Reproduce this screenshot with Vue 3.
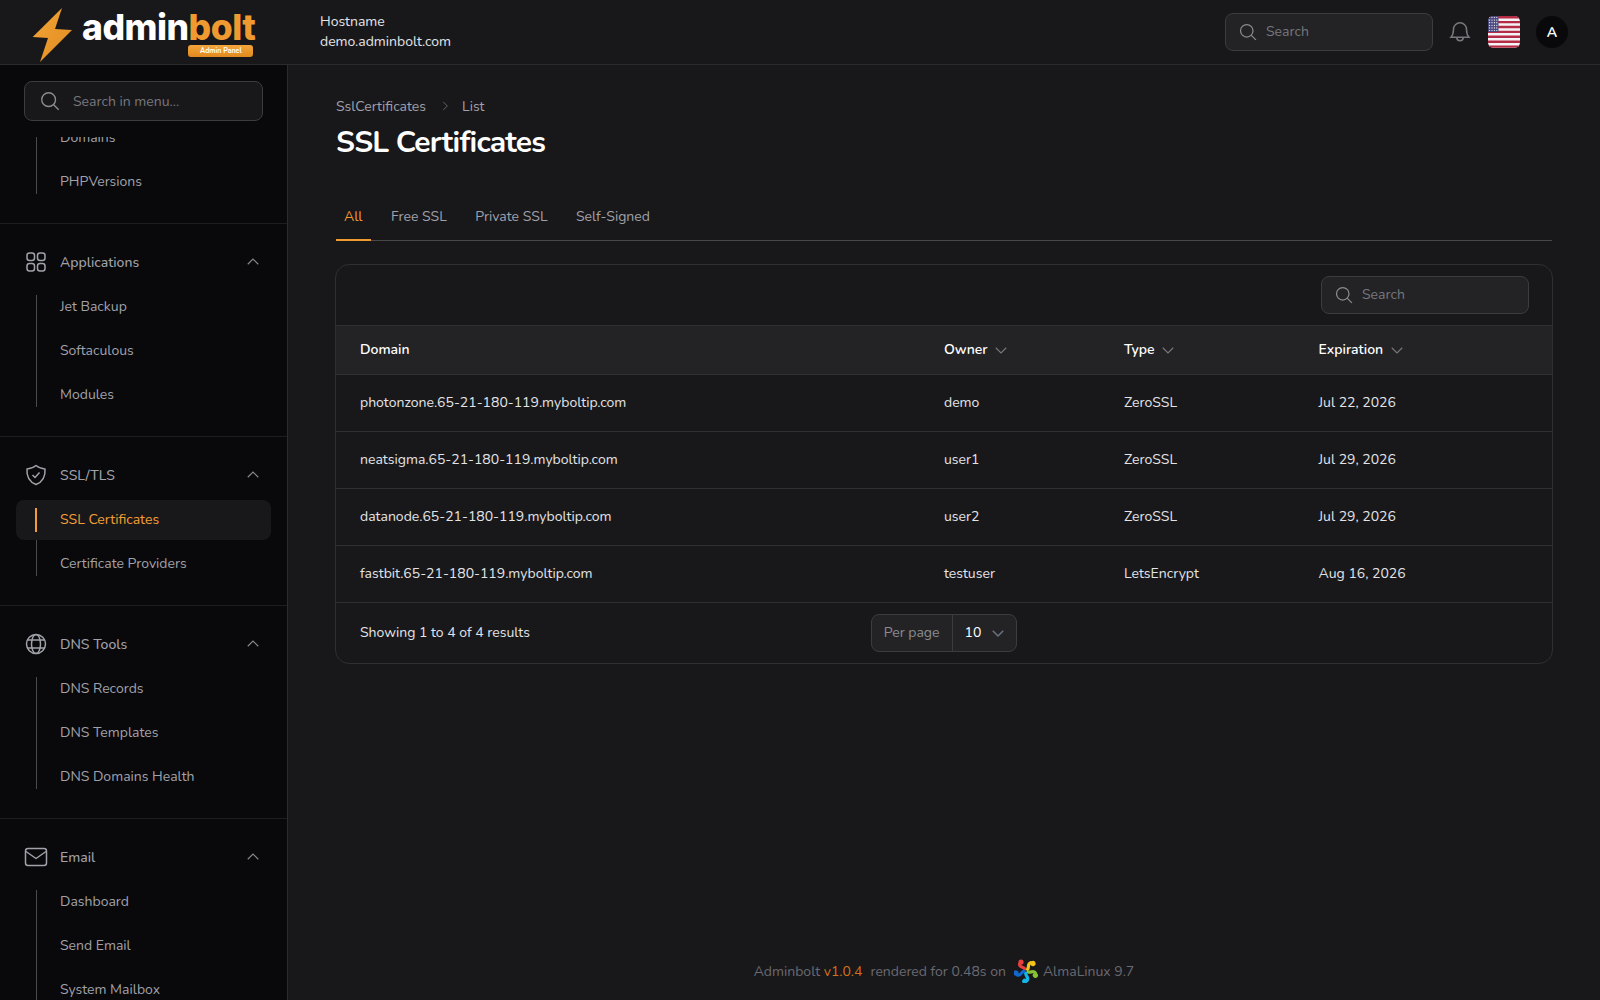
<template>
  <div class="shell">
    <header class="topbar">
      <div class="logo">
        <svg class="bolt" viewBox="0 0 40 54" width="40" height="54">
          <defs>
            <linearGradient id="boltFill" x1="0" y1="0" x2="1" y2="1">
              <stop offset="0" stop-color="#f4a63a" />
              <stop offset="1" stop-color="#e08a1e" />
            </linearGradient>
          </defs>
          <polygon points="30,0 23,21 40,22 8,54 16,30 0.7,29" fill="url(#boltFill)" />
        </svg>
        <div class="wordmark">
          <div class="word"><span>admin</span><span class="orange">bolt</span></div>
          <div class="badge">Admin Panel</div>
        </div>
      </div>
      <div class="hostname">
        <div>Hostname</div>
        <div>demo.adminbolt.com</div>
      </div>
      <div class="top-right">
        <label class="input top-search">
          <svg class="ico" viewBox="0 0 24 24"><circle cx="10.5" cy="10.5" r="7.5" /><path d="M16 16l5.5 5.5" /></svg>
          <span>Search</span>
        </label>
        <svg class="bell" viewBox="0 0 24 24">
          <path d="M6 9.5a6 6 0 0 1 12 0c0 3.6.9 5.8 2.3 7.3H3.7C5.1 15.3 6 13.1 6 9.5z" />
          <path d="M9 17a3 3 0 0 0 6 0" />
        </svg>
        <svg class="flag" viewBox="0 0 32 32" width="32" height="32">
          <rect width="32" height="32" rx="5" fill="#f3f3f5" />
          <path v-for="y in stripes" :key="y" :d="`M0 ${y}h32`" stroke="#b52a45" stroke-width="2.4" />
          <rect x="0" y="0" width="10.5" height="16" fill="#4a4a80" />
          <circle v-for="s in stars" :key="s.id" :cx="s.x" :cy="s.y" r=".6" fill="#fff" />
        </svg>
        <div class="avatar">A</div>
      </div>
    </header>

    <div class="body">
      <aside class="sidebar">
        <div class="side-search">
          <label class="input">
            <svg class="ico" viewBox="0 0 24 24"><circle cx="10.5" cy="10.5" r="7.5" /><path d="M16 16l5.5 5.5" /></svg>
            <span>Search in menu...</span>
          </label>
        </div>
        <div class="side-scroll">
          <nav class="side-nav">
            <section v-for="group in groups" :key="group.name" class="group">
              <div v-if="group.name !== 'Top'" class="group-head">
                <svg class="group-ico" viewBox="0 0 24 24" v-html="group.icon"></svg>
                <span>{{ group.name }}</span>
                <svg class="chev" viewBox="0 0 24 24"><path d="M5 15l7-7 7 7" /></svg>
              </div>
              <ul>
                <li v-for="item in group.items" :key="item" :class="{ active: item === 'SSL Certificates' }">
                  {{ item }}
                </li>
              </ul>
            </section>
          </nav>
        </div>
      </aside>

      <main class="main">
        <div class="crumbs">
          <span>SslCertificates</span>
          <svg viewBox="0 0 24 24"><path d="M9 5l7 7-7 7" /></svg>
          <span>List</span>
        </div>
        <h1>SSL Certificates</h1>

        <div class="tabs">
          <a v-for="tab in tabs" :key="tab" :class="{ on: tab === 'All' }">{{ tab }}</a>
        </div>

        <div class="card">
          <div class="card-top">
            <label class="input table-search">
              <svg class="ico" viewBox="0 0 24 24"><circle cx="10.5" cy="10.5" r="7.5" /><path d="M16 16l5.5 5.5" /></svg>
              <span>Search</span>
            </label>
          </div>
          <table>
            <thead>
              <tr>
                <th class="c1">Domain</th>
                <th v-for="col in sortable" :key="col.name" :class="col.cls">
                  {{ col.name }}
                  <svg class="sort" viewBox="0 0 24 24"><path d="M5 9l7 7 7-7" /></svg>
                </th>
              </tr>
            </thead>
            <tbody>
              <tr v-for="row in rows" :key="row.domain">
                <td>{{ row.domain }}</td>
                <td>{{ row.owner }}</td>
                <td>{{ row.type }}</td>
                <td>{{ row.expires }}</td>
              </tr>
            </tbody>
          </table>
          <div class="card-foot">
            <span class="showing">Showing 1 to 4 of 4 results</span>
            <div class="perpage">
              <span class="pp-label">Per page</span>
              <span class="pp-value">10
                <svg viewBox="0 0 24 24"><path d="M5 9l7 7 7-7" /></svg>
              </span>
            </div>
          </div>
        </div>

        <footer class="foot">
          <span>Adminbolt <b>v1.0.4</b></span>
          <span>rendered for 0.48s on</span>
          <svg class="alma" viewBox="0 0 24 24" width="24" height="24">
            <g v-for="(color, i) in almaColors" :key="color" :transform="`rotate(${i * 72} 12 12)`">
              <circle cx="7" cy="3" r="2.6" :fill="color" />
              <path d="M5.5 5C5.500 8.500 9 7.500 11 10" fill="none" :stroke="color" stroke-width="3.2" stroke-linecap="round" />
            </g>
          </svg>
          <span class="distro">AlmaLinux 9.7</span>
        </footer>
      </main>
    </div>
  </div>
</template>

<script setup>
const stripes = [1.2, 6.1, 11, 15.9, 20.8, 25.7, 30.6]
const stars = []
for (let r = 0; r < 6; r++) {
  for (let c = 0; c < 4; c++) {
    stars.push({ id: `${r}-${c}`, x: 1.6 + c * 2.4, y: 1.5 + r * 2.6 })
  }
}

const almaColors = ['#e8403f', '#f5c21a', '#86c232', '#12b5e5', '#1268d0']

const icons = {
  apps: '<rect x="3" y="3" width="7.5" height="7.5" rx="2.5"/><rect x="13.5" y="3" width="7.5" height="7.5" rx="2.5"/><rect x="3" y="13.5" width="7.5" height="7.5" rx="2.5"/><rect x="13.5" y="13.5" width="7.5" height="7.5" rx="2.5"/>',
  shield: '<path d="M12 2.5c2.8 2.3 5.8 3.3 9 3.4.6 7.5-2.3 13-9 15.6C5.3 18.9 2.4 13.4 3 5.9c3.2-.1 6.2-1.1 9-3.4z"/><path d="M8.5 12l2.5 2.5 4.5-5"/>',
  globe: '<circle cx="12" cy="12" r="9.5"/><ellipse cx="12" cy="12" rx="4.5" ry="9.5"/><path d="M3.5 8h17M3.5 16h17"/>',
  mail: '<rect x="1.5" y="3.5" width="21" height="17" rx="2.5"/><path d="M2 6.5l10 7 10-7"/>',
}

const groups = [
  { name: 'Top', items: ['Domains', 'PHPVersions'] },
  { name: 'Applications', icon: icons.apps, items: ['Jet Backup', 'Softaculous', 'Modules'] },
  { name: 'SSL/TLS', icon: icons.shield, items: ['SSL Certificates', 'Certificate Providers'] },
  { name: 'DNS Tools', icon: icons.globe, items: ['DNS Records', 'DNS Templates', 'DNS Domains Health'] },
  { name: 'Email', icon: icons.mail, items: ['Dashboard', 'Send Email', 'System Mailbox'] },
]

const tabs = ['All', 'Free SSL', 'Private SSL', 'Self-Signed']

const sortable = [
  { name: 'Owner', cls: 'c2' },
  { name: 'Type', cls: 'c3' },
  { name: 'Expiration', cls: 'c4' },
]

const rows = [
  { domain: 'photonzone.65-21-180-119.myboltip.com', owner: 'demo', type: 'ZeroSSL', expires: 'Jul 22, 2026' },
  { domain: 'neatsigma.65-21-180-119.myboltip.com', owner: 'user1', type: 'ZeroSSL', expires: 'Jul 29, 2026' },
  { domain: 'datanode.65-21-180-119.myboltip.com', owner: 'user2', type: 'ZeroSSL', expires: 'Jul 29, 2026' },
  { domain: 'fastbit.65-21-180-119.myboltip.com', owner: 'testuser', type: 'LetsEncrypt', expires: 'Aug 16, 2026' },
]
</script>

<style>
html,
body {
  margin: 0;
  background: #18181b;
  overflow: hidden;
}
</style>

<style scoped>
.shell {
  width: 1600px;
  height: 1000px;
  display: flex;
  flex-direction: column;
  background: #18181b;
  color: #fff;
  font-family: Nunito, "Noto Sans", sans-serif;
  font-size: 14px;
  overflow: hidden;
}

.topbar {
  height: 64px;
  flex: none;
  display: flex;
  align-items: center;
  border-bottom: 1px solid #2b2b2e;
  padding: 0 32px;
}

.logo {
  display: flex;
  align-items: flex-start;
  width: 288px;
  height: 54px;
  margin-top: 5px;
}

.bolt {
  flex: none;
}

.wordmark {
  margin-left: 10px;
  position: relative;
}

.word {
  font-family: Inter, sans-serif;
  font-weight: 800;
  font-size: 35.5px;
  line-height: 40px;
  letter-spacing: -0.5px;
}

.orange {
  color: #ee9a30;
}

.badge {
  position: absolute;
  right: 2px;
  top: 37px;
  width: 65px;
  height: 12px;
  border-radius: 3px;
  background: linear-gradient(#f3a63c, #e08a1e);
  font-size: 7px;
  line-height: 12px;
  font-weight: 700;
  text-align: center;
}

.hostname {
  font-size: 14px;
  line-height: 20px;
  color: #e4e4e7;
}

.top-right {
  margin-left: auto;
  display: flex;
  align-items: center;
}

.input {
  display: flex;
  align-items: center;
  height: 38px;
  box-sizing: border-box;
  border: 1px solid #3c3c3f;
  border-radius: 8px;
  background: #232326;
  color: #77777d;
  padding-left: 12px;
  gap: 8px;
}

.input span {
  padding-bottom: 2px;
}

.ico {
  width: 20px;
  height: 20px;
  fill: none;
  stroke: #8b8b90;
  stroke-width: 1.5;
}

.top-search {
  width: 208px;
}

.bell {
  width: 26px;
  height: 26px;
  margin-left: 14px;
  fill: none;
  stroke: #77777d;
  stroke-width: 1.4;
}

.flag {
  margin-left: 15px;
  border-radius: 5px;
}

.avatar {
  width: 32px;
  height: 32px;
  margin-left: 16px;
  border-radius: 50%;
  background: #09090b;
  display: flex;
  align-items: center;
  justify-content: center;
  font-size: 14px;
  font-weight: 700;
}

.body {
  flex: 1;
  display: flex;
  min-height: 0;
}

.sidebar {
  width: 288px;
  flex: none;
  box-sizing: border-box;
  background: #09090b;
  border-right: 1px solid #2b2b2e;
  display: flex;
  flex-direction: column;
}

.side-search {
  height: 72px;
  flex: none;
  box-sizing: border-box;
  padding: 16px 24px 0;
}

.side-search .input {
  height: 40px;
  padding-left: 14px;
  background: #18181b;
  gap: 12px;
}

.side-search .input span {
  padding-bottom: 0;
}

.side-search .ico {
  width: 22px;
  height: 22px;
}

.side-scroll {
  flex: 1;
  overflow: hidden;
}

.side-nav {
  margin-top: -19px;
}

.group {
  padding: 0 0 21px;
  margin-bottom: 24px;
  border-bottom: 1px solid #1d1d20;
}

.group-head {
  height: 28px;
  display: flex;
  align-items: center;
  margin-bottom: 11px;
  padding: 0 25px 0 24px;
  color: #a1a1aa;
  font-weight: 500;
}

.group-ico {
  width: 24px;
  height: 24px;
  margin-right: 12px;
  fill: none;
  stroke: #a1a1aa;
  stroke-width: 1.5;
  stroke-linejoin: round;
}

.chev {
  width: 18px;
  height: 18px;
  margin-left: auto;
  fill: none;
  stroke: #88888f;
  stroke-width: 1.5;
}

.group ul {
  list-style: none;
  margin: 0;
  padding: 0;
}

.group li {
  position: relative;
  height: 40px;
  margin: 4px 16px 0;
  padding-left: 44px;
  line-height: 39px;
  color: #a1a1aa;
  border-radius: 8px;
  font-size: 14px;
}

.group li::before {
  content: "";
  position: absolute;
  left: 20px;
  top: -4px;
  bottom: 0;
  width: 1px;
  background: #4a4a50;
}

.group li:first-child {
  margin-top: 0;
}

.group li:first-child::before {
  top: 8px;
}

.group li:last-child::before {
  bottom: 8px;
}

.group li.active {
  background: #18181b;
  color: #f59e34;
}

.group li.active::before {
  left: 19px;
  width: 2px;
  top: 8px;
  bottom: 8px;
  background: #f59e34;
}

.main {
  flex: 1;
  min-width: 0;
  box-sizing: border-box;
  padding: 31px 48px 0;
  display: flex;
  flex-direction: column;
}

.crumbs {
  display: flex;
  align-items: center;
  height: 20px;
  color: #a1a1aa;
  font-size: 14px;
}

.crumbs svg {
  width: 14px;
  height: 14px;
  margin: 0 10px 0 12px;
  fill: none;
  stroke: #6b6b72;
  stroke-width: 1.5;
}

h1 {
  margin: 9px 0 0;
  font-size: 30px;
  line-height: 36px;
  font-weight: 700;
  letter-spacing: -0.8px;
}

.tabs {
  display: flex;
  margin-top: 32px;
  height: 47px;
  border-bottom: 1px solid #48484c;
}

.tabs a {
  padding: 0 8px;
  margin-right: 12.5px;
  line-height: 47px;
  height: 48px;
  box-sizing: border-box;
  color: #a1a1aa;
}

.tabs a.on {
  color: #ee9a30;
  border-bottom: 2px solid #ee9a30;
}

.card {
  margin: 23px -1px 0;
  border: 1px solid #2f2f32;
  border-radius: 14px;
  overflow: hidden;
}

.card-top {
  height: 60px;
  display: flex;
  align-items: center;
  justify-content: flex-end;
  padding-right: 23px;
}

.table-search {
  width: 208px;
}

table {
  width: 100%;
  border-collapse: collapse;
  table-layout: fixed;
  font-size: 14px;
}

th {
  height: 46px;
  padding: 0 0 2px 24px;
  text-align: left;
  font-weight: 600;
  background: #232326;
  border-top: 1px solid #2f2f32;
  border-bottom: 1px solid #2f2f32;
}

.c1 {
  width: 560px;
}

.c2 {
  width: 156px;
}

.c3 {
  width: 170.5px;
}

.sort {
  width: 18px;
  height: 18px;
  vertical-align: -5px;
  margin-left: 1px;
  fill: none;
  stroke: #77777d;
  stroke-width: 1.5;
}

td {
  height: 54px;
  padding: 0 0 2px 24px;
  color: #e4e4e7;
  border-bottom: 1px solid #2f2f32;
}

.card-foot {
  height: 60px;
  display: grid;
  grid-template-columns: 1fr auto 1fr;
  align-items: center;
  padding: 0 24px;
}

.showing {
  color: #e4e4e7;
  padding-bottom: 2px;
}

.perpage {
  display: flex;
  height: 38px;
  box-sizing: border-box;
  border: 1px solid #3c3c3f;
  border-radius: 8px;
  background: #232326;
  line-height: 36px;
}

.pp-label {
  padding: 0 12px;
  color: #8b8b90;
  border-right: 1px solid #3c3c3f;
}

.pp-value {
  padding: 0 9px 0 12px;
  display: flex;
  align-items: center;
  gap: 8px;
}

.pp-value svg {
  width: 18px;
  height: 18px;
  fill: none;
  stroke: #6b7280;
  stroke-width: 2;
}

.foot {
  margin-top: auto;
  height: 52px;
  display: flex;
  align-items: center;
  justify-content: center;
  gap: 8px;
  color: #6a6a70;
  margin-bottom: 3px;
}

.foot b {
  font-weight: 400;
  color: #d0701a;
}

.distro {
  margin-left: -3px;
}
</style>
